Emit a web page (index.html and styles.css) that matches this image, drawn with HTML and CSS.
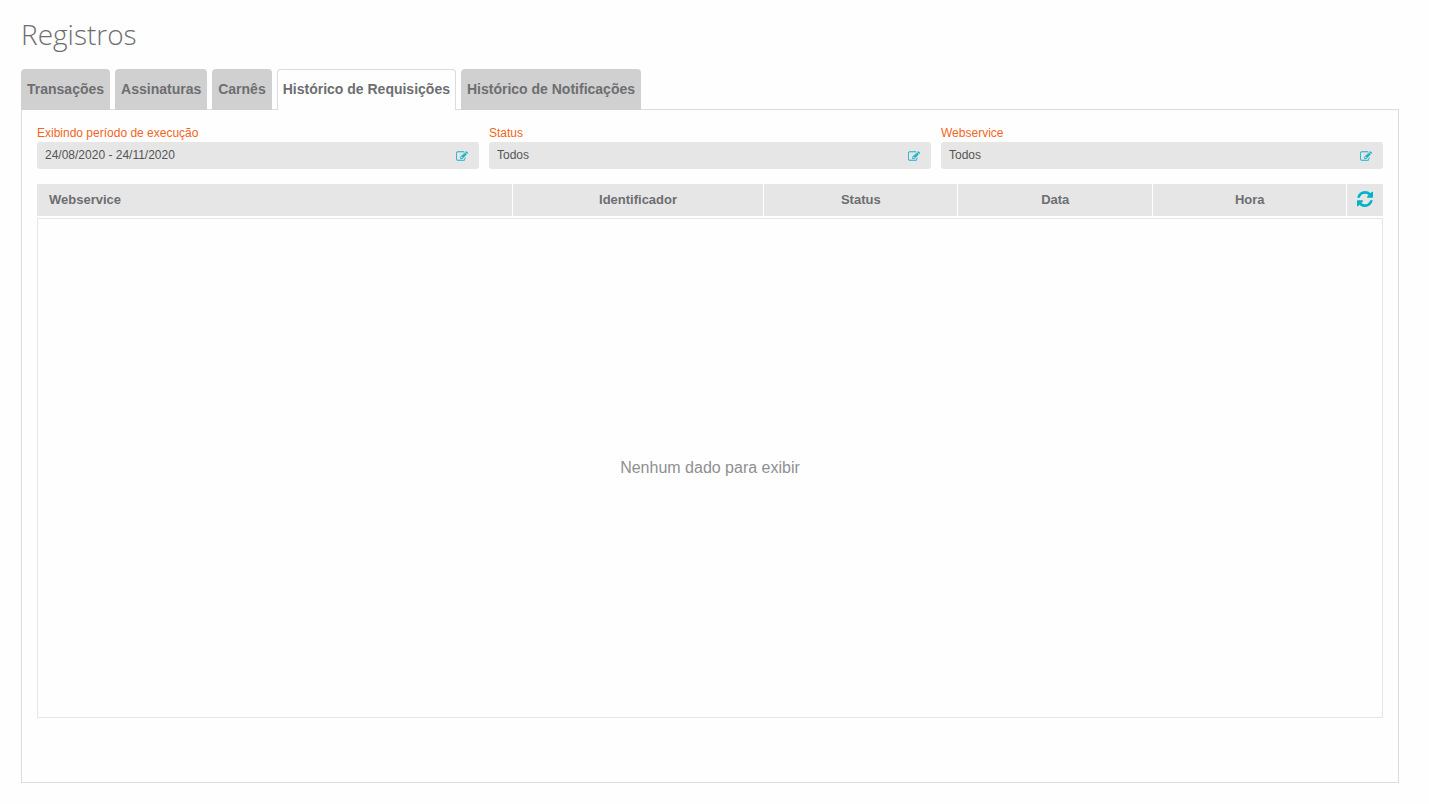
FILE: index.html
```html
<!DOCTYPE html>
<html lang="pt-BR">
<head>
<meta charset="utf-8">
<title>Registros</title>
<link rel="stylesheet" href="styles.css">
</head>
<body>
<svg class="sprite" aria-hidden="true">
  <symbol id="edit" viewBox="0 128 1792 1408"><path d="M888 1184l116-116-152-152-116 116v56h96v96h56zm440-720q-16-16-33 1l-350 350q-17 17-1 33t33-1l350-350q17-17 1-33zm80 594v190q0 119-84.500 203.500T1120 1536H288q-119 0-203.500-84.500T0 1248V416q0-119 84.500-203.500T288 128h832q63 0 117 25 15 7 18 23 3 17-9 29l-49 49q-14 14-32 8-23-6-45-6H288q-66 0-113 47t-47 113v832q0 66 47 113t113 47h832q66 0 113-47t47-113v-126q0-13 9-22l64-64q15-15 35-7t20 29zm-96-738l288 288-672 672H640V928zm444 132l-92 92-288-288 92-92q28-28 68-28t68 28l152 152q28 28 28 68t-28 68z"/></symbol>
  <symbol id="refresh" viewBox="0 0 1536 1536"><path d="M1511 928q0 5-1 7-64 268-268 434.500T764 1536q-146 0-282.500-55T238 1324l-129 129q-19 19-45 19t-45-19-19-45V960q0-26 19-45t45-19h448q26 0 45 19t19 45-19 45l-137 137q71 66 161 102t187 36q134 0 250-65t186-179q11-17 53-117 8-23 30-23h192q13 0 22.500 9.500t9.500 22.500zm25-800v448q0 26-19 45t-45 19h-448q-26 0-45-19t-19-45 19-45l138-138Q969 256 768 256q-134 0-250 65T332 500q-11 17-53 117-8 23-30 23H50q-13 0-22.500-9.500T18 608v-7q65-268 270-434.500T768 0q146 0 284 55.500T1297 212l130-129q19-19 45-19t45 19 19 45z"/></symbol>
</svg>
<main class="page">
  <h1 class="title">Registros</h1>
  <div class="tabs" role="tablist">
    <button class="tab" type="button" role="tab" aria-selected="false">Transações</button>
    <button class="tab" type="button" role="tab" aria-selected="false">Assinaturas</button>
    <button class="tab" type="button" role="tab" aria-selected="false">Carnês</button>
    <button class="tab tab-active" type="button" role="tab" aria-selected="true">Histórico de Requisições</button>
    <button class="tab" type="button" role="tab" aria-selected="false">Histórico de Notificações</button>
  </div>
  <section class="panel" role="tabpanel">
    <form class="filters">
      <div class="field">
        <label class="label" for="period">Exibindo período de execução</label>
        <div class="control">
          <input class="input" id="period" type="text" value="24/08/2020 - 24/11/2020" readonly>
          <svg class="edit-icon" aria-hidden="true"><use href="#edit"/></svg>
        </div>
      </div>
      <div class="field">
        <label class="label" for="status">Status</label>
        <div class="control">
          <select class="input" id="status"><option>Todos</option></select>
          <svg class="edit-icon" aria-hidden="true"><use href="#edit"/></svg>
        </div>
      </div>
      <div class="field">
        <label class="label" for="webservice">Webservice</label>
        <div class="control">
          <select class="input" id="webservice"><option>Todos</option></select>
          <svg class="edit-icon" aria-hidden="true"><use href="#edit"/></svg>
        </div>
      </div>
    </form>
    <table class="grid">
      <colgroup>
        <col>
        <col class="col-id">
        <col class="col-short">
        <col class="col-short">
        <col class="col-short">
        <col class="col-action">
      </colgroup>
      <thead>
        <tr>
          <th class="head head-first" scope="col">Webservice</th>
          <th class="head" scope="col">Identificador</th>
          <th class="head" scope="col">Status</th>
          <th class="head" scope="col">Data</th>
          <th class="head" scope="col">Hora</th>
          <th class="head head-action" scope="col"><button class="refresh" type="button" aria-label="Atualizar"><svg class="refresh-icon" aria-hidden="true"><use href="#refresh"/></svg></button></th>
        </tr>
      </thead>
      <tbody>
        <tr><td class="empty" colspan="6">Nenhum dado para exibir</td></tr>
      </tbody>
    </table>
  </section>
</main>
</body>
</html>
```
FILE: styles.css
```css
* { box-sizing: border-box; }

body {
  margin: 0;
  background: #fefefe;
  color: #6d6e71;
  font-family: "Liberation Sans", Arial, sans-serif;
}

.sprite { position: absolute; width: 0; height: 0; }

.page { padding: 14px 30px 21px 21px; }

.title {
  margin: 0 0 15px;
  font: 300 28px/40px "Open Sans", sans-serif;
}

.tabs {
  display: flex;
  gap: 5px;
  position: relative;
  margin-bottom: -1px;
}

.tab {
  height: 41px;
  padding: 0 6px 1px;
  border: 0;
  border-radius: 4px 4px 0 0;
  background: #d0d0d0;
  color: #6d6e71;
  font: bold 14px/20px "Liberation Sans", Arial, sans-serif;
  cursor: pointer;
}

.tab-active {
  padding: 0 5px 2px;
  border: 1px solid #dcdcdc;
  border-bottom: 0;
  background: #fefefe;
}

.panel {
  padding: 15px 15px 64px;
  border: 1px solid #dcdcdc;
}

.filters {
  display: grid;
  grid-template-columns: repeat(3, 1fr);
  gap: 10px;
  margin-bottom: 15px;
}

.label {
  display: block;
  color: #f26522;
  font-size: 12px;
  line-height: 17px;
}

.control { position: relative; }

.input {
  display: block;
  appearance: none;
  width: 100%;
  height: 27px;
  padding: 0 32px 2px 8px;
  border: 0;
  border-radius: 3px;
  background: #e6e6e6;
  color: #555;
  font: 12px/16px "Liberation Sans", Arial, sans-serif;
}

.edit-icon {
  position: absolute;
  right: 11px;
  top: 9px;
  width: 12px;
  height: 10px;
  fill: #17b1c6;
  pointer-events: none;
}

.grid {
  width: 100%;
  table-layout: fixed;
  border-collapse: separate;
  border-spacing: 0;
}

.col-id { width: 18.65%; }
.col-short { width: 14.45%; }
.col-action { width: 36px; }

.head {
  height: 34px;
  padding: 0 0 0 1px;
  border-right: 1px solid #fefefe;
  border-bottom: 2px solid #fefefe;
  background: #e6e6e6;
  font-size: 13px;
  line-height: 16px;
}

.head-first { padding-left: 12px; text-align: left; }
.head-action { padding: 0 0 2px; border-right: 0; }

.refresh {
  display: block;
  width: 100%;
  padding: 0;
  border: 0;
  background: none;
  cursor: pointer;
}

.refresh-icon {
  display: block;
  width: 16px;
  height: 16px;
  margin: 0 auto;
  fill: #00b3c9;
}

.empty {
  height: 500px;
  padding: 0;
  border: 1px solid #e6e6e6;
  color: #8e8f91;
  font-size: 16px;
  text-align: center;
}
```
